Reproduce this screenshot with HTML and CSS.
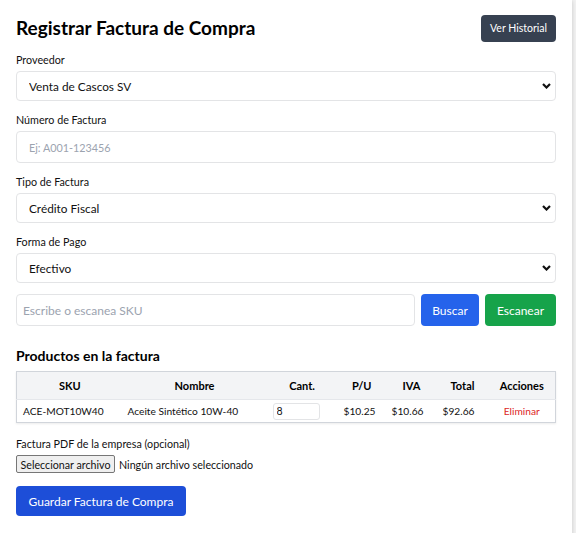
FILE: index.html
```html
<!DOCTYPE html>
<html lang="es">
<head>
<meta charset="utf-8">
<title>Registrar Factura de Compra</title>
<link rel="stylesheet" href="styles.css">
</head>
<body>
<div class="card">
  <div class="header">
    <h1 class="title">Registrar Factura de Compra</h1>
    <button class="btn btn-dark">Ver Historial</button>
  </div>

  <div class="field">
    <label class="label">Proveedor</label>
    <div class="select-wrap">
      <select class="control sel"><option>Venta de Cascos SV</option></select>
      <svg class="chev" viewBox="0 0 9 6" width="9" height="6"><path d="M1 1l3.5 3.5L8 1" fill="none" stroke="#111" stroke-width="2.2"/></svg>
    </div>
  </div>

  <div class="field">
    <label class="label">Número de Factura</label>
    <input class="control num-input" type="text" placeholder="Ej: A001-123456">
  </div>

  <div class="field">
    <label class="label">Tipo de Factura</label>
    <div class="select-wrap">
      <select class="control sel"><option>Crédito Fiscal</option></select>
      <svg class="chev" viewBox="0 0 9 6" width="9" height="6"><path d="M1 1l3.5 3.5L8 1" fill="none" stroke="#111" stroke-width="2.2"/></svg>
    </div>
  </div>

  <div class="field">
    <label class="label">Forma de Pago</label>
    <div class="select-wrap">
      <select class="control sel"><option>Efectivo</option></select>
      <svg class="chev" viewBox="0 0 9 6" width="9" height="6"><path d="M1 1l3.5 3.5L8 1" fill="none" stroke="#111" stroke-width="2.2"/></svg>
    </div>
  </div>

  <div class="sku-row">
    <input class="control sku" type="text" placeholder="Escribe o escanea SKU">
    <button class="btn btn-blue">Buscar</button>
    <button class="btn btn-green">Escanear</button>
  </div>

  <h2 class="subtitle">Productos en la factura</h2>
  <table class="table">
    <thead>
      <tr>
        <th class="c-sku">SKU</th>
        <th class="c-name">Nombre</th>
        <th class="c-qty">Cant.</th>
        <th class="c-pu">P/U</th>
        <th class="c-iva">IVA</th>
        <th class="c-tot">Total</th>
        <th class="c-act">Acciones</th>
      </tr>
    </thead>
    <tbody>
      <tr>
        <td class="d-sku">ACE-MOT10W40</td>
        <td class="d-name">Aceite Sintético 10W-40</td>
        <td class="d-qty"><input class="qty" type="number" value="8"></td>
        <td class="num">$10.25</td>
        <td class="num">$10.66</td>
        <td class="num">$92.66</td>
        <td class="act"><a class="del">Eliminar</a></td>
      </tr>
    </tbody>
  </table>

  <div class="pdf">
    <label class="label">Factura PDF de la empresa (opcional)</label>
    <div class="file-row">
      <span class="file-btn">Seleccionar archivo</span>
      <span class="file-name">Ningún archivo seleccionado</span>
    </div>
  </div>

  <button class="btn btn-save">Guardar Factura de Compra</button>
</div>
</body>
</html>
```

FILE: styles.css
```css
* { box-sizing: border-box; }
html, body { margin: 0; padding: 0; }
body {
  background: #f1f1f1;
  font-family: Lato, "Noto Sans", sans-serif;
  color: #111827;
  width: 576px;
  height: 533px;
  overflow: hidden;
}
.card {
  width: 572px;
  min-height: 540px;
  background: #fff;
  box-shadow: 0 1px 4px rgba(0,0,0,0.18);
  padding: 14px 16px 16px 16px;
}
.header {
  display: flex;
  justify-content: space-between;
  align-items: center;
  height: 28px;
  margin-bottom: 10px;
}
.title {
  margin: 0;
  font-size: 19px;
  font-weight: 700;
  line-height: 28px;
  color: #000;
}
.btn {
  border: 0;
  border-radius: 4px;
  color: #fff;
  font-family: inherit;
  cursor: pointer;
  white-space: nowrap;
  padding: 0;
}
.btn-dark {
  background: #374151;
  font-size: 10.5px;
  height: 27px;
  width: 75px;
}
.field { margin-bottom: 11px; }
.label {
  display: block;
  font-size: 10.75px;
  line-height: 15px;
  margin-bottom: 4px;
  color: #111;
}
.control {
  display: block;
  width: 100%;
  height: 32px;
  border: 1px solid #e3e4e6;
  border-radius: 4px;
  background: #fff;
  font-family: inherit;
  color: #111;
  padding: 0 12px;
  outline: none;
}
.control::placeholder { color: #9ca3af; }
.sel {
  height: 30px;
  font-size: 11.8px;
  appearance: none;
  -webkit-appearance: none;
  padding-left: 12px;
}
.num-input { font-size: 10.8px; padding-left: 12px; }
.select-wrap { position: relative; }
.chev {
  position: absolute;
  right: 5px;
  top: 12px;
  pointer-events: none;
}
.sku-row {
  display: flex;
  gap: 6px;
  margin-top: 2px;
  margin-bottom: 21px;
}
.sku { flex: 1; font-size: 12px; padding-left: 6px; }
.btn-blue, .btn-green {
  height: 32px;
  font-size: 12px;
}
.btn-blue { background: #2563eb; width: 58px; }
.btn-green { background: #16a34a; width: 71px; }
.subtitle {
  margin: 0 0 6px 0;
  font-size: 14px;
  font-weight: 700;
  line-height: 18px;
  color: #000;
}
.table {
  width: 540px;
  border-collapse: collapse;
  border: 1px solid #d1d5db;
  box-shadow: 0 1px 2px rgba(0,0,0,0.08);
  table-layout: fixed;
}
.table th {
  background: #f3f4f6;
  font-weight: 700;
  font-size: 11px;
  height: 28px;
  padding: 0 6px;
  border-bottom: 1px solid #e5e7eb;
  color: #000;
}
.table td {
  height: 23px;
  padding: 0 6px;
  font-size: 10.2px;
  color: #111;
  white-space: nowrap;
}
.c-sku { width: 106px; text-align: center; }
.c-name { width: 144px; text-align: center; }
.c-qty { width: 71px; text-align: center; }
.c-pu { width: 42px; text-align: right; }
.c-iva { width: 50px; text-align: right; }
.c-tot { width: 51px; text-align: right; }
.c-act { text-align: center; }
.table th.c-pu { padding-right: 8px; }
.table th.c-iva { padding-right: 9px; }
.table th.c-act, .table td.act { padding-left: 14px; padding-right: 6px; }
.table td.d-name { padding-left: 5px; }
.num { text-align: right; }
.act { text-align: center; }
.qty {
  display: block;
  width: 47px;
  height: 17px;
  border: 1px solid #e3e4e6;
  border-radius: 3px;
  font-family: inherit;
  font-size: 10.5px;
  padding: 0 3px;
  color: #111;
  -moz-appearance: textfield;
}
.qty::-webkit-inner-spin-button, .qty::-webkit-outer-spin-button { -webkit-appearance: none; margin: 0; }
.del { color: #dc2626; }
.pdf { margin-top: 13px; }
.pdf .label { margin-bottom: 4px; }
.file-row {
  display: flex;
  align-items: center;
  gap: 4px;
  font-size: 10.7px;
  margin-bottom: 13px;
  color: #111;
}
.file-btn {
  display: flex;
  align-items: center;
  height: 18px;
  width: 99px;
  justify-content: center;
  background: #efefef;
  border: 1px solid #767676;
  border-radius: 2px;
}
.btn-save {
  background: #1d4ed8;
  height: 30px;
  font-size: 12px;
  width: 170px;
}
```
